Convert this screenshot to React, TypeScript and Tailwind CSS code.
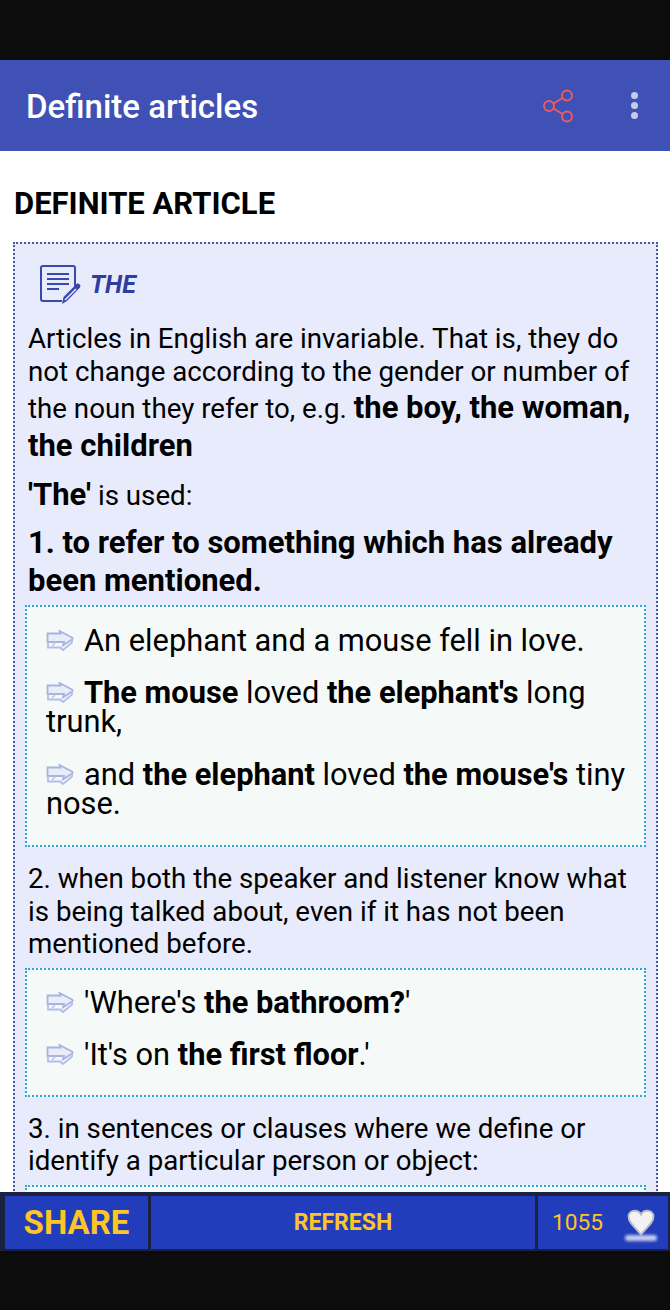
const arrow = (
  <svg viewBox="0 0 28 22" className="inline-block w-[28px] h-[22px] align-[-1px]" fill="none" strokeWidth="1.800">
    <path d="M1.500 3.500h13l-1-2.500 12.500 6.500c1 .6 1 1.400 0 2L17 15.500l1-3.500H1.500z" fill="#e9ecf9" stroke="#aab3e0" />
    <path d="M2 12v5.500h12l3 2.500 9-7.500V9" stroke="#b5bde6" />
    <path d="M6 16l3-3" stroke="#c5cbec" />
  </svg>
);

function Example({ children }: { children: React.ReactNode }) {
  return (
    <p className="leading-[29px] mb-[24px] first:mb-[23px] text-[30.800px]">
      {arrow}
      <span className="ml-[10px]">{children}</span>
    </p>
  );
}

export default function App() {
  return (
    <div className="w-[670px] h-[1310px] flex flex-col overflow-hidden bg-[#0c0c0c] font-['Roboto',sans-serif]">
      <div className="h-[60px] shrink-0" />

      <header className="h-[91px] shrink-0 bg-[#3f51b5] flex items-center pl-[26px] pr-[32px]">
        <h1 className="text-white text-[33px] font-medium flex-1 pt-[3px]">Definite articles</h1>
        <svg viewBox="0 0 34 34" className="w-[34px] h-[34px] mr-[55px]" fill="none" stroke="#ef5a5f" strokeWidth="2">
          <circle cx="7" cy="17" r="5" />
          <circle cx="25" cy="6.500" r="5" />
          <circle cx="25" cy="27.500" r="5" />
          <path d="M11.500 14.500l9-5.500M11.500 19.500l9 5.500" />
        </svg>
        <div className="flex flex-col gap-[3px]">
          <span className="w-[7px] h-[7px] rounded-full bg-[#c5cae9]" />
          <span className="w-[7px] h-[7px] rounded-full bg-[#c5cae9]" />
          <span className="w-[7px] h-[7px] rounded-full bg-[#c5cae9]" />
        </div>
      </header>

      <main className="flex-1 min-h-0 overflow-hidden bg-white pl-[13px] pr-[12px] text-black">
        <h2 className="text-[31px] font-bold leading-[36px] mt-[35px] mb-[20px] ml-[1px]">DEFINITE ARTICLE</h2>

        <section className="bg-[#e8ebfb] border-2 border-dotted border-[#4a55a8] px-[13px] text-[27.700px]">
          <div className="flex items-center h-[78px] pl-[12px] pt-[3px]">
            <svg viewBox="0 0 42 40" className="w-[42px] h-[40px]" fill="none" stroke="#3949ab" strokeWidth="2">
              <path d="M22 36H3a2 2 0 0 1-2-2V3a2 2 0 0 1 2-2h30a2 2 0 0 1 2 2v22" />
              <path d="M7 9h22M7 14h22M7 19h22M7 24h12" strokeWidth="2.200" />
              <path d="M22 39l1.500-7 13-13c2-1.500 5 1.500 3.500 3.500L27 36z" fill="#3949ab" stroke="none" />
              <path d="M25 35l11-11" stroke="#e8ebfb" strokeWidth="1.500" />
            </svg>
            <span className="ml-[8px] text-[#2f3e9e] italic font-bold text-[25px]">THE</span>
          </div>

          <p className="leading-[33px]">
            Articles in English are invariable. That is, they do not change according to the gender or number of
          </p>
          <p className="leading-[37px] mt-[1px] mb-[11px]">
            the noun they refer to, e.g. <b className="font-bold text-[31px]">the boy, the woman, the children</b>
          </p>
          <p className="leading-[37px] mb-[10px]">
            <b className="font-bold text-[31px]">'The'</b> is used:
          </p>
          <p className="font-bold text-[31px] leading-[38px] mb-[5px]">
            1. to refer to something which has already been mentioned.
          </p>

          <div className="bg-[#f5faf9] border-2 border-dotted border-[#26a9d6] -mx-[3px] pl-[19px] pr-[12px] pt-[19px] pb-[3px] mb-[16px]">
            <Example>An elephant and a mouse fell in love.</Example>
            <Example>
              <b className="font-bold">The mouse</b> loved <b className="font-bold">the elephant's</b> long trunk,
            </Example>
            <Example>
              and <b className="font-bold">the elephant</b> loved <b className="font-bold">the mouse's</b> tiny nose.
            </Example>
          </div>

          <p className="leading-[32.500px] mb-[7px]">
            2. when both the speaker and listener know what is being talked about, even if it has not been mentioned before.
          </p>

          <div className="bg-[#f5faf9] border-2 border-dotted border-[#26a9d6] -mx-[3px] pl-[19px] pr-[12px] pt-[18px] pb-[2px] mb-[16px]">
            <Example>
              'Where's <b className="font-bold">the bathroom?</b>'
            </Example>
            <Example>
              'It's on <b className="font-bold">the first floor</b>.'
            </Example>
          </div>

          <p className="leading-[32.500px] mb-[7px]">
            3. in sentences or clauses where we define or identify a particular person or object:
          </p>

          <div className="bg-[#f5faf9] border-2 border-dotted border-[#26a9d6] -mx-[3px] h-[200px]" />
        </section>
      </main>

      <footer className="h-[59px] shrink-0 bg-[#1b2140] flex gap-[3px] pl-[5px] pr-[2px] pt-[4px] pb-[2px] mb-[59px]">
        <button className="w-[143px] bg-[#213dbb] text-[#ffc425] text-[33px] font-bold">SHARE</button>
        <button className="flex-1 bg-[#213dbb] text-[#ffc425] text-[23px] font-bold pt-[2px]">REFRESH</button>
        <div className="w-[130px] bg-[#213dbb] flex items-center pl-[14px]">
          <span className="text-[#ffc425] text-[22.700px] flex-1 pt-[1px]">1055</span>
          <div className="relative w-[30px] h-[34px] mr-[12px] mt-[2px]">
            <svg viewBox="0 0 24 24" className="w-[30px] h-[30px]" fill="#f2f2f2" stroke="#b9bcc6" strokeWidth="1.500">
              <path d="M12 22C6 15 2 12 2 7.500 2 4.500 4.500 3 7 3c2 0 4 1 5 3 1-2 3-3 5-3 2.500 0 5 1.500 5 4.500C22 12 18 15 12 22z" />
            </svg>
            <span className="absolute left-[-1px] bottom-0 w-[32px] h-[6px] rounded-full bg-[#c5cdf0] blur-[1.500px]" />
          </div>
        </div>
      </footer>
    </div>
  );
}
